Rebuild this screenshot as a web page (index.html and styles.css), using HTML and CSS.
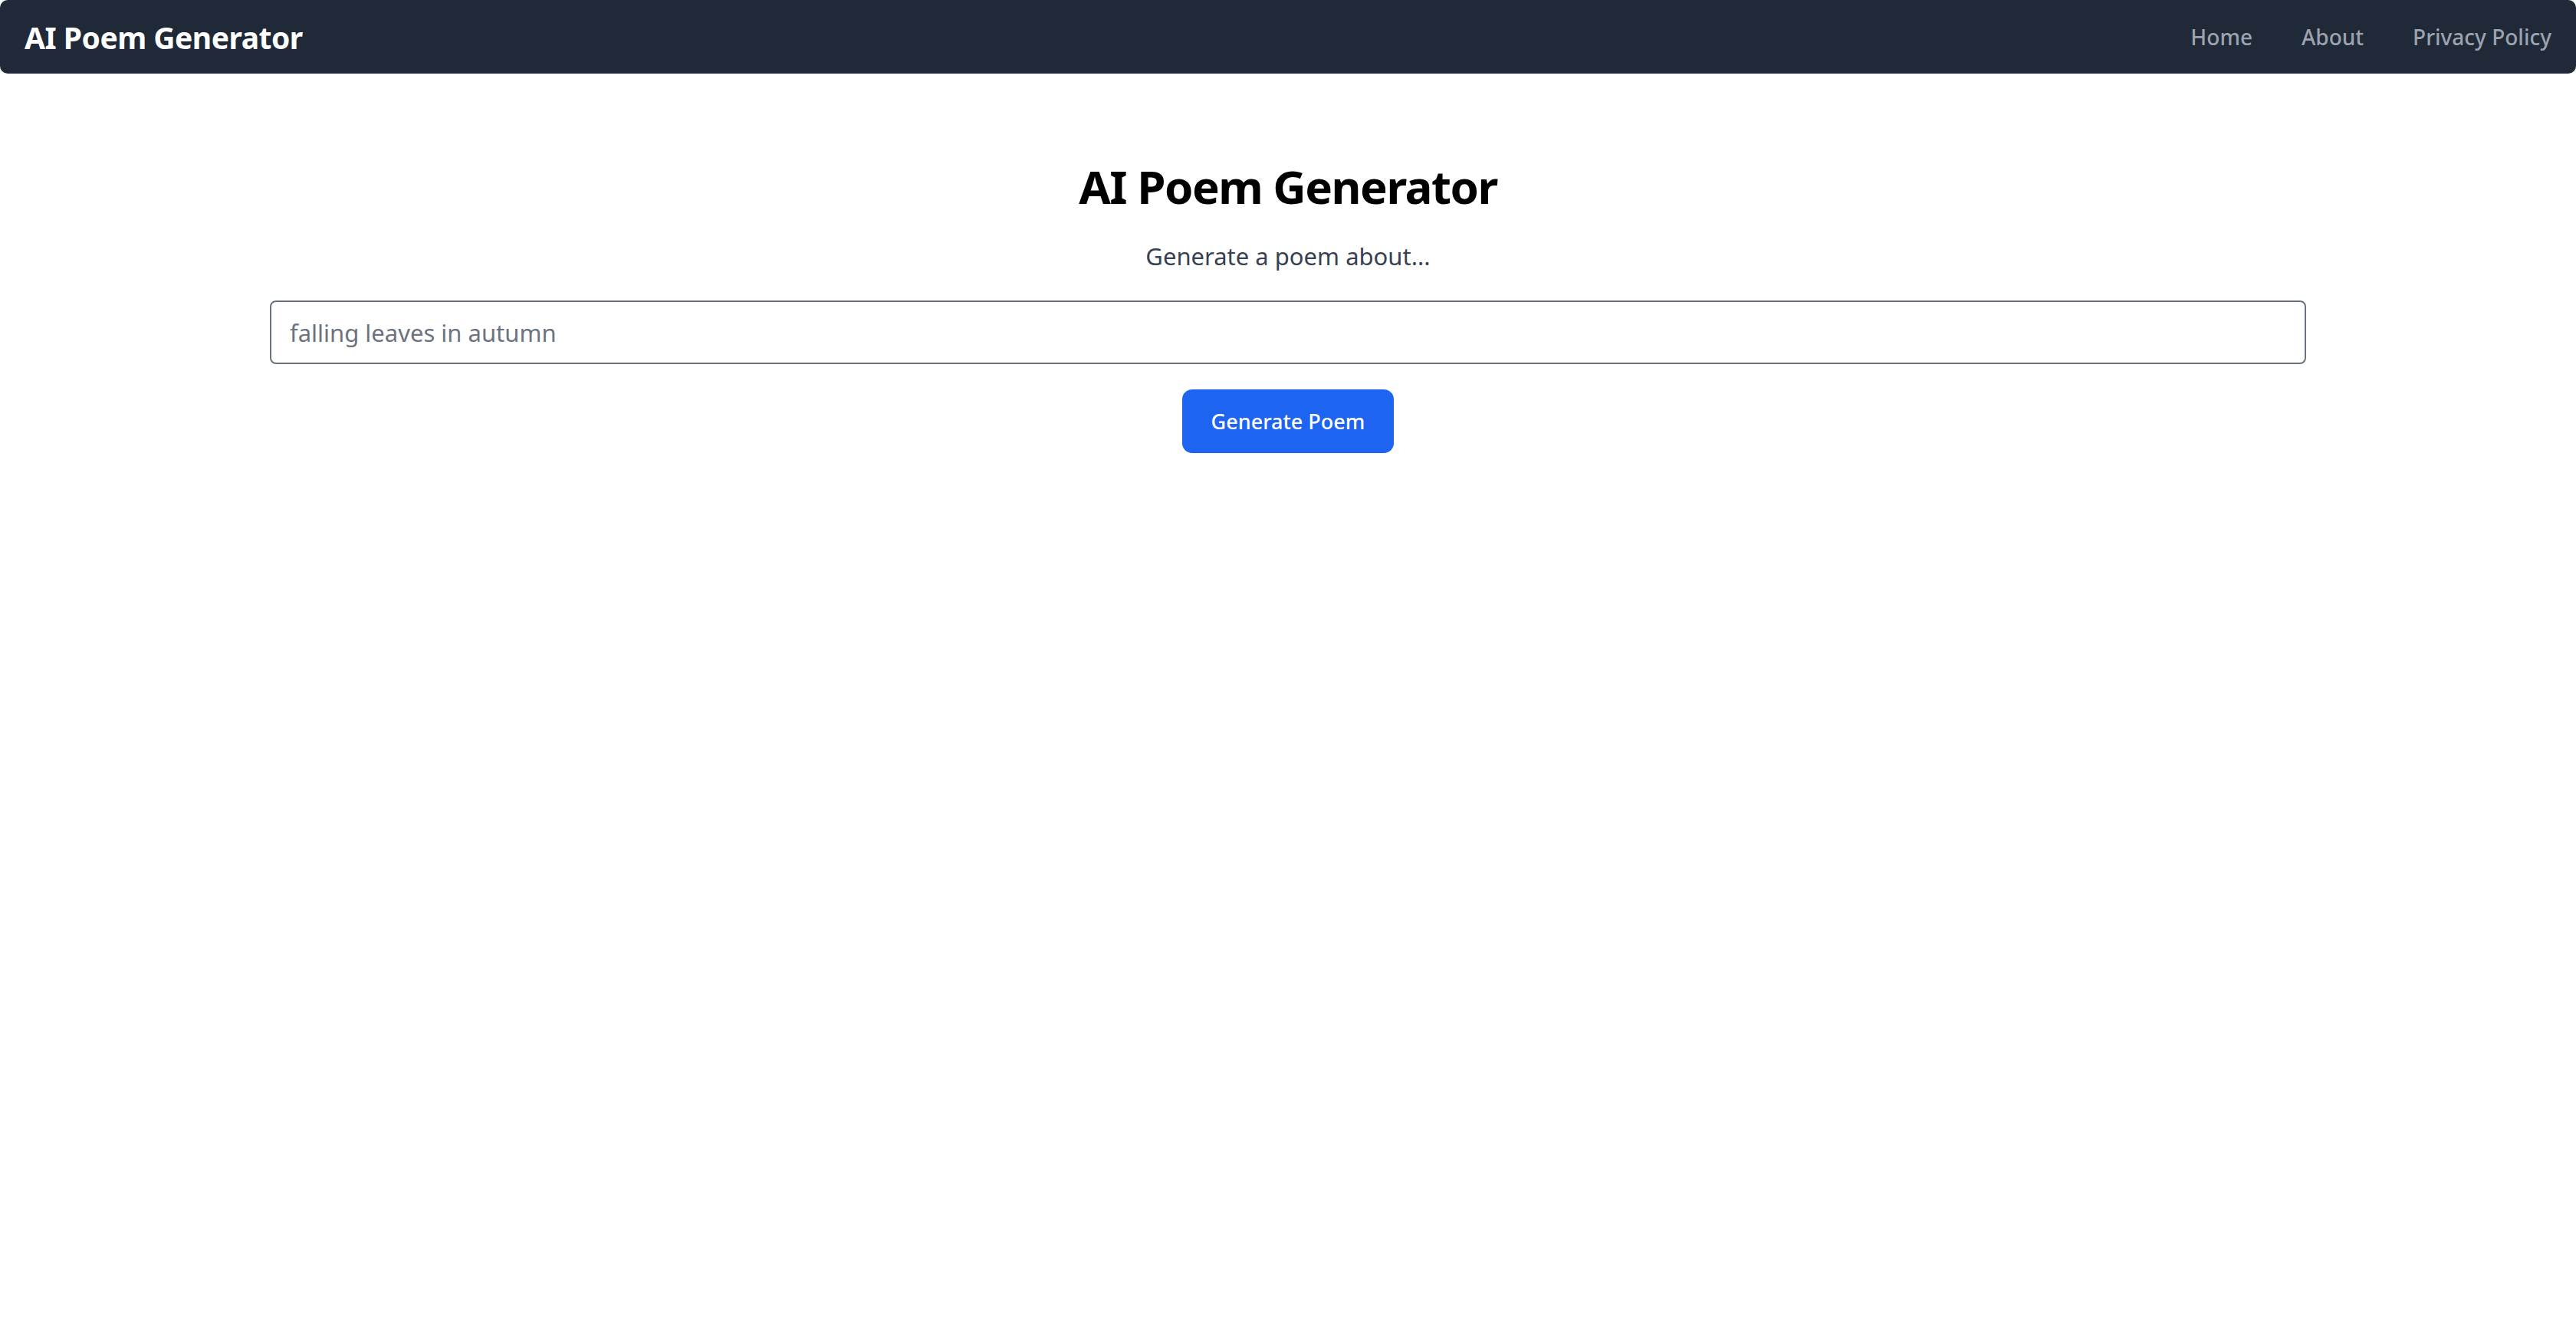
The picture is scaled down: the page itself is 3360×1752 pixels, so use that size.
FILE: index.html
```html
<!DOCTYPE html>
<html lang="en">
<head>
    <meta charset="UTF-8">
    <meta name="viewport" content="width=device-width, initial-scale=1.0">
    <title>AI Poem Generator</title>
    <link rel="stylesheet" href="styles.css">
</head>
<body>
    <nav class="navbar">
        <a class="brand" href="#">AI Poem Generator</a>
        <div class="nav-links">
            <a href="#">Home</a>
            <a href="#">About</a>
            <a href="#">Privacy Policy</a>
        </div>
    </nav>
    <main class="main">
        <h1 class="title">AI Poem Generator</h1>
        <p class="subtitle">Generate a poem about...</p>
        <input class="topic-input" type="text" placeholder="falling leaves in autumn">
        <button class="generate-btn">Generate Poem</button>
    </main>
</body>
</html>
```

FILE: styles.css
```css
:root {
    --nav-bg: #1f2937;
    --nav-link: #9ca3af;
    --text-muted: #374151;
    --border: #6b7280;
    --blue: #1d64f0;
}
body {
    margin: 0;
    font-family: "Noto Sans", "Open Sans", sans-serif;
    background: #fff;
}
a {
    text-decoration: none;
}
.navbar {
    display: flex;
    align-items: center;
    justify-content: space-between;
    height: 96px;
    padding: 0 32px;
    background-color: var(--nav-bg);
    border-radius: 10px;
}
.brand {
    color: #fff;
    font-size: 39px;
    font-weight: 700;
    letter-spacing: -0.5px;
}
.nav-links {
    display: flex;
    gap: 64px;
}
.nav-links a {
    color: var(--nav-link);
    font-size: 28px;
    font-weight: 500;
}
.main {
    display: flex;
    flex-direction: column;
    align-items: center;
    max-width: 2656px;
    margin: 0 auto;
}
.title {
    margin: 110px 0 0;
    font-size: 60px;
    line-height: 74px;
    font-weight: 700;
    letter-spacing: -1.5px;
    color: #000;
}
.subtitle {
    margin: 30px 0 0;
    font-size: 31px;
    line-height: 48px;
    color: var(--text-muted);
}
.topic-input {
    box-sizing: border-box;
    width: 100%;
    height: 83px;
    margin-top: 34px;
    padding: 0 24px;
    font-family: inherit;
    font-size: 31px;
    color: #111827;
    border: 2px solid var(--border);
    border-radius: 8px;
    outline: none;
}
.topic-input::placeholder {
    color: var(--border);
}
.generate-btn {
    height: 83px;
    margin-top: 33px;
    padding: 0 38px;
    font-family: inherit;
    font-size: 27px;
    font-weight: 500;
    color: #fff;
    background-color: var(--blue);
    border: none;
    border-radius: 13px;
    cursor: pointer;
}
```
